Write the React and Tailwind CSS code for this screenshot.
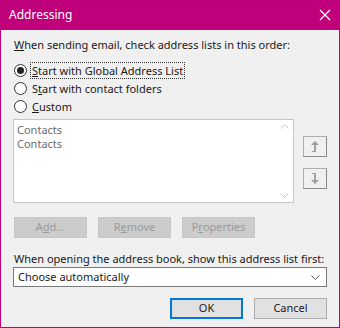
import { useState } from "react";

const font = { fontFamily: '"Noto Sans", "Open Sans", sans-serif' };

function Radio({ checked, focused, children }) {
  return (
    <label className="flex items-center h-[18px] gap-[4px]">
      <span className="w-[13px] h-[13px] rounded-full border border-[#333] bg-white flex items-center justify-center">
        {checked && <span className="w-[7px] h-[7px] rounded-full bg-[#222]" />}
      </span>
      <span
        className={
          focused
            ? "px-[1px] leading-[15px] outline-1 outline-dotted outline-[#333]"
            : "px-[1px] leading-[15px]"
        }
      >
        {children}
      </span>
    </label>
  );
}

function GrayButton({ children }) {
  return (
    <div className="w-[73px] h-[21px] bg-[#cccccc] border border-[#c6c6c6] flex items-center justify-center text-[#9a9a9a]">
      {children}
    </div>
  );
}

function ArrowButton({ down }) {
  return (
    <div className="w-[24px] h-[21px] bg-[#f0f0f0] border border-[#adadad] border-r-[#8a8a8a] border-b-[#8a8a8a] flex items-center justify-center">
      <svg width="8" height="11" viewBox="0 0 8 11" fill="#a0a0a0">
        {down ? (
          <>
            <rect x="1" y="0" width="4" height="1" />
            <rect x="3" y="0" width="2" height="8" />
            <polygon points="0,7 8,7 4,11" />
          </>
        ) : (
          <>
            <polygon points="0,4 8,4 4,0" />
            <rect x="3" y="3" width="2" height="8" />
            <rect x="1" y="10" width="4" height="1" />
          </>
        )}
      </svg>
    </div>
  );
}

export default function App() {
  const [choice] = useState("gal");
  return (
    <div
      className="w-[340px] h-[328px] bg-[#f0f0f0] border border-t-0 border-[#c0007a] flex flex-col text-[11px] text-[#1a1a1a]"
      style={font}
    >
      <div className="h-[30px] bg-[#c0007a] flex items-center justify-between pl-[8px] pr-[8px] text-white text-[12px]">
        <span>Addressing</span>
        <svg width="12" height="12" viewBox="0 0 12 12" stroke="white" strokeWidth="1.2">
          <line x1="1" y1="1" x2="11" y2="11" />
          <line x1="11" y1="1" x2="1" y2="11" />
        </svg>
      </div>

      <div className="flex flex-col px-[12px]">
        <div className="mt-[7px] h-[16px] leading-[16px] pl-[1px]">
          <u>W</u>hen sending email, check address lists in this order:
        </div>
        <div className="mt-[8px] flex flex-col pl-[1px]">
          <Radio checked={choice === "gal"} focused>
            <u>S</u>tart with Global Address List
          </Radio>
          <Radio>
            S<u>t</u>art with contact folders
          </Radio>
          <Radio>
            <u>C</u>ustom
          </Radio>
        </div>

        <div className="mt-[4px] flex">
          <div className="w-[281px] h-[84px] bg-white border border-[#c5c5c5] flex">
            <div className="flex-1 pl-[3px] pt-[3px] text-[#6d6d6d] leading-[14px]">
              <div>Contacts</div>
              <div>Contacts</div>
            </div>
            <div className="w-[17px] flex flex-col justify-between items-center py-[4px]">
              <svg width="9" height="5" viewBox="0 0 9 5" fill="none" stroke="#c8c8c8">
                <polyline points="0.5,4.5 4.5,0.5 8.5,4.5" />
              </svg>
              <svg width="9" height="5" viewBox="0 0 9 5" fill="none" stroke="#c8c8c8">
                <polyline points="0.5,0.5 4.5,4.5 8.5,0.5" />
              </svg>
            </div>
          </div>
          <div className="ml-[9px] pt-[17px] flex flex-col gap-[11px]">
            <ArrowButton />
            <ArrowButton down />
          </div>
        </div>

        <div className="mt-[14px] flex gap-[11px] pl-[1px]">
          <GrayButton>
            A<u>d</u>d...
          </GrayButton>
          <GrayButton>
            R<u>e</u>move
          </GrayButton>
          <GrayButton>
            P<u>r</u>operties
          </GrayButton>
        </div>

        <div className="mt-[13px] h-[16px] leading-[16px] pl-[1px]">
          When opening the address book, show this address list first:
        </div>
        <div className="h-[20px] bg-white border border-[#7a7a7a] flex items-center justify-between pl-[4px] pr-[6px]">
          <span>Choose automatically</span>
          <svg width="9" height="5" viewBox="0 0 9 5" fill="none" stroke="#555">
            <polyline points="0.5,0.5 4.5,4.5 8.5,0.5" />
          </svg>
        </div>

        <div className="mt-[11px] flex justify-end gap-[11px]">
          <div className="w-[73px] h-[21px] bg-[#e1e1e1] border-2 border-[#0078d7] flex items-center justify-center">
            OK
          </div>
          <div className="w-[73px] h-[21px] bg-[#e1e1e1] border border-[#adadad] flex items-center justify-center">
            Cancel
          </div>
        </div>
      </div>
    </div>
  );
}
